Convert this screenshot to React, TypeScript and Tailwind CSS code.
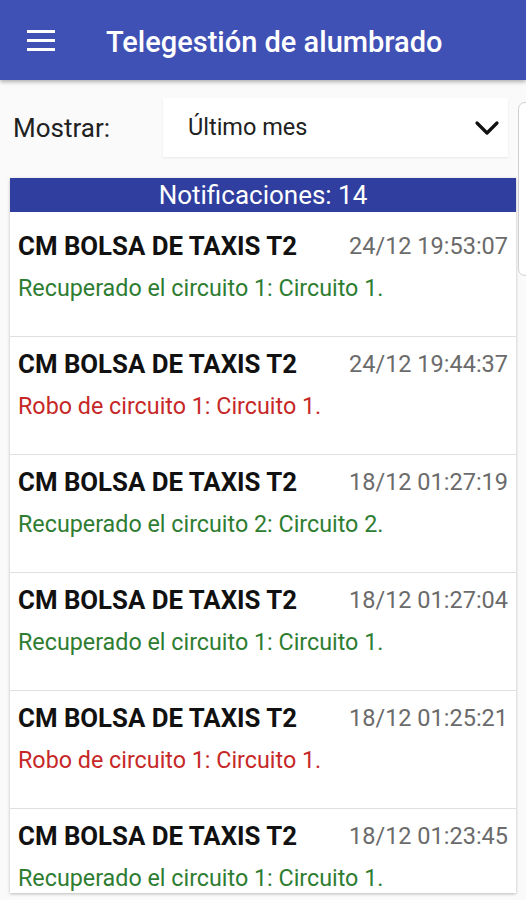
import React from "react";

type Notif = { id: number; site: string; time: string; text: string; ok: boolean };

const items: Notif[] = [
  { id: 1, site: "CM BOLSA DE TAXIS T2", time: "24/12 19:53:07", text: "Recuperado el circuito 1: Circuito 1.", ok: true },
  { id: 2, site: "CM BOLSA DE TAXIS T2", time: "24/12 19:44:37", text: "Robo de circuito 1: Circuito 1.", ok: false },
  { id: 3, site: "CM BOLSA DE TAXIS T2", time: "18/12 01:27:19", text: "Recuperado el circuito 2: Circuito 2.", ok: true },
  { id: 4, site: "CM BOLSA DE TAXIS T2", time: "18/12 01:27:04", text: "Recuperado el circuito 1: Circuito 1.", ok: true },
  { id: 5, site: "CM BOLSA DE TAXIS T2", time: "18/12 01:25:21", text: "Robo de circuito 1: Circuito 1.", ok: false },
  { id: 6, site: "CM BOLSA DE TAXIS T2", time: "18/12 01:23:45", text: "Recuperado el circuito 1: Circuito 1.", ok: true },
];

export default function App() {
  return (
    <div
      className="relative w-[526px] h-[900px] overflow-hidden bg-[#fafafa]"
      style={{ fontFamily: "Roboto, 'Noto Sans', sans-serif" }}
    >
      {/* App bar */}
      <header className="h-[80px] bg-[#3f51b5] flex items-center shadow-[0_2px_4px_rgba(0,0,0,0.3)] relative z-10">
        <div className="w-[106px] pl-[27px] flex flex-col gap-[6px]">
          <div className="w-[28px] h-[3px] bg-white" />
          <div className="w-[28px] h-[3px] bg-white" />
          <div className="w-[28px] h-[3px] bg-white" />
        </div>
        <h1 className="text-white text-[29px] font-medium leading-none mt-[4px]">
          Telegestión de alumbrado
        </h1>
      </header>

      {/* Filter row */}
      <div className="flex items-center mt-[18px] pl-[13px] pr-[18px]">
        <span className="w-[150px] text-[26px] leading-none text-[#212121]">Mostrar:</span>
        <div className="flex-1 h-[59px] bg-white shadow-[0_1px_2px_rgba(0,0,0,0.08)] flex items-center pl-[25px] pr-[8px]">
          <span className="flex-1 text-[23.5px] leading-none text-[#212121]">Último mes</span>
          <svg width="26" height="16" viewBox="0 0 26 16" fill="none">
            <path d="M3 3l10 10 10-10" stroke="#111" strokeWidth="3.2" strokeLinecap="round" strokeLinejoin="round" />
          </svg>
        </div>
      </div>

      {/* Notifications card */}
      <div className="mt-[21px] ml-[10px] w-[506px] h-[715px] bg-white overflow-hidden shadow-[0_1px_3px_rgba(0,0,0,0.25)]">
        <div className="h-[34px] bg-[#303f9f] flex items-center justify-center text-white text-[26px] leading-none">
          Notificaciones: 14
        </div>
        <div className="pt-[7px]">
          {items.map((n) => (
            <div key={n.id} className="border-b border-[#e0e0e0] px-[8px] pt-[14px] pb-[33px]">
              <div className="flex items-center justify-between h-[28px]">
                <span className="text-[25.8px] leading-none font-bold text-[#111]">{n.site}</span>
                <span className="text-[23.5px] leading-none text-[#6b6b6b]">{n.time}</span>
              </div>
              <div
                className={`mt-[14px] h-[28px] flex items-center text-[23.3px] leading-none ${
                  n.ok ? "text-[#2e7d32]" : "text-[#c62828]"
                }`}
              >
                {n.text}
              </div>
            </div>
          ))}
        </div>
      </div>

      {/* Scroll indicator on the right edge */}
      <div className="absolute left-[518px] top-[102px] w-[14px] h-[174px] rounded-[7px] border border-[#d0d0d0] bg-white" />
    </div>
  );
}
